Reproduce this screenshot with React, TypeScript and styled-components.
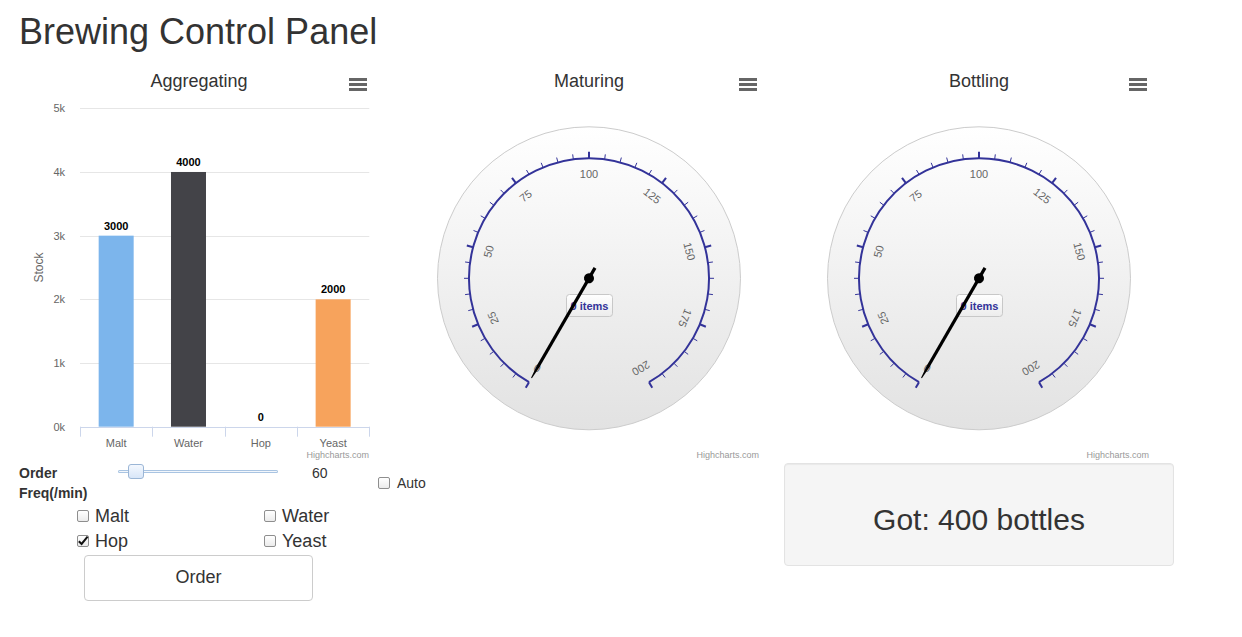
import React from "react";
import styled, { createGlobalStyle } from "styled-components";

const GlobalStyle = createGlobalStyle`
  html, body { margin: 0; padding: 0; background: #fff; }
  body {
    font-family: "Liberation Sans", Arial, Helvetica, sans-serif;
    color: #333;
    font-size: 14px;
    line-height: 20px;
  }
  * { box-sizing: border-box; }
`;

const Page = styled.div`
  width: 1242px;
  height: 637px;
  overflow: hidden;
  padding-left: 19px;
`;

const Title = styled.h1`
  margin: 12px 0 11px;
  font-size: 36px;
  line-height: 39.6px;
  font-weight: 400;
  color: #333;
`;

const Panels = styled.div`
  display: grid;
  grid-template-columns: repeat(3, 360px);
  column-gap: 30px;
  align-items: start;
`;

const Column = styled.div`
  display: flex;
  flex-direction: column;
  min-width: 0;
`;

/* ---------- chart frame ---------- */

const ChartBox = styled.div`
  width: 360px;
  height: 400px;
  display: flex;
  flex-direction: column;
`;

const ChartHeader = styled.div`
  height: 37px;
  display: grid;
  grid-template-columns: 1fr auto 1fr;
  align-items: start;
`;

const ChartTitle = styled.div`
  grid-column: 2;
  padding-top: 7px;
  font-size: 18px;
  line-height: 22px;
  color: #333;
  white-space: nowrap;
`;

const MenuButton = styled.button`
  grid-column: 3;
  justify-self: end;
  margin: 15px 12px 0 0;
  padding: 0;
  border: 0;
  background: none;
  width: 18px;
  height: 13px;
  display: block;
  cursor: pointer;
`;

const PlotSvg = styled.svg`
  display: block;
  overflow: visible;
  font-family: "Liberation Sans", Arial, Helvetica, sans-serif;
`;

const Credits = styled.div`
  height: 12px;
  padding-right: 10px;
  text-align: right;
  font-size: 9px;
  line-height: 8px;
  color: #999;
`;

const MenuIcon = () => (
  <svg width="18" height="13" viewBox="0 0 18 13">
    <rect x="0" y="0" width="18" height="3" fill="#666" />
    <rect x="0" y="5" width="18" height="3" fill="#666" />
    <rect x="0" y="10" width="18" height="3" fill="#666" />
  </svg>
);

const Chart: React.FC<{ title: string; children: React.ReactNode }> = ({ title, children }) => (
  <ChartBox>
    <ChartHeader>
      <ChartTitle>{title}</ChartTitle>
      <MenuButton aria-label="Chart menu">
        <MenuIcon />
      </MenuButton>
    </ChartHeader>
    {children}
    <Credits>Highcharts.com</Credits>
  </ChartBox>
);

/* ---------- bar chart ---------- */

const BARS = [
  { name: "Malt", value: 3000, color: "#7cb5ec" },
  { name: "Water", value: 4000, color: "#434348" },
  { name: "Hop", value: 0, color: "#90ed7d" },
  { name: "Yeast", value: 2000, color: "#f7a35c" },
];

const PL = 61;
const PR = 350.3;
const PT = 8.3;
const PB = 326.7;
const yOf = (v: number) => PB - (v / 5000) * (PB - PT);
const crisp = (v: number) => Math.round(v) + 0.5;

const BarChart = () => {
  const cat = (PR - PL) / BARS.length;
  return (
    <PlotSvg width={360} height={351} viewBox="0 0 360 351">
      {[1000, 2000, 3000, 4000, 5000].map((v) => (
        <line key={v} x1={PL} x2={PR} y1={crisp(yOf(v))} y2={crisp(yOf(v))} stroke="#e6e6e6" strokeWidth={1} />
      ))}
      {[0, 1000, 2000, 3000, 4000, 5000].map((v) => (
        <text key={v} x={46} y={yOf(v) + 4} fontSize={11} fill="#666" textAnchor="end">
          {v / 1000}k
        </text>
      ))}
      <text transform={`translate(24 ${(PT + PB) / 2}) rotate(-90)`} fontSize={12} fill="#666" textAnchor="middle">
        Stock
      </text>
      {BARS.map((b, i) => {
        const c = PL + cat * i + cat / 2;
        const top = yOf(b.value);
        return (
          <g key={b.name}>
            {b.value > 0 && <rect x={c - 17.5} y={top} width={35} height={PB - top} fill={b.color} />}
            <text
              x={c}
              y={top - 6}
              fontSize={11}
              fontWeight="bold"
              fill="#000"
              stroke="#fff"
              strokeWidth={2}
              strokeLinejoin="round"
              paintOrder="stroke"
              textAnchor="middle"
            >
              {b.value}
            </text>
            <text x={c} y={346.5} fontSize={11} fill="#666" textAnchor="middle">
              {b.name}
            </text>
          </g>
        );
      })}
      <line x1={PL} x2={PR} y1={crisp(PB)} y2={crisp(PB)} stroke="#ccd6eb" strokeWidth={1} />
      {[0, 1, 2, 3, 4].map((i) => {
        const x = crisp(PL + cat * i);
        return <line key={i} x1={x} x2={x} y1={PB} y2={PB + 10} stroke="#ccd6eb" strokeWidth={1} />;
      })}
    </PlotSvg>
  );
};

/* ---------- gauge ---------- */

const CX = 180;
const CY = 178.3;
const AXIS = "#333399";

const polar = (r: number, deg: number): [number, number] => {
  const a = (deg * Math.PI) / 180;
  return [CX + r * Math.sin(a), CY - r * Math.cos(a)];
};
const angleOf = (v: number) => -150 + v * 1.5;

const Gauge: React.FC<{ value: number; id: string }> = ({ value, id }) => {
  const [sx, sy] = polar(120, -150);
  const [ex, ey] = polar(120, 150);
  const ticks: React.ReactNode[] = [];
  for (let v = 0; v <= 200; v += 5) {
    const major = v % 25 === 0;
    const a = angleOf(v);
    const [x1, y1] = polar(120, a);
    const [x2, y2] = polar(major ? 126.5 : 125, a);
    ticks.push(<line key={v} x1={x1} y1={y1} x2={x2} y2={y2} stroke={AXIS} strokeWidth={major ? 2 : 1} />);
  }
  const labels = [0, 25, 50, 75, 100, 125, 150, 175, 200].map((v) => {
    const a = angleOf(v);
    const [x, y] = polar(104, a);
    return (
      <text
        key={v}
        transform={`translate(${x} ${y}) rotate(${a})`}
        dy="0.36em"
        fontSize={11}
        fill="#666"
        textAnchor="middle"
      >
        {v}
      </text>
    );
  });
  const needleAngle = angleOf(value);
  return (
    <PlotSvg width={360} height={351} viewBox="0 0 360 351">
      <defs>
        <linearGradient id={`${id}-pane`} x1="0" y1="0" x2="0" y2="1">
          <stop offset="0" stopColor="#ffffff" />
          <stop offset="1" stopColor="#e2e2e2" />
        </linearGradient>
        <linearGradient id={`${id}-label`} x1="0" y1="0" x2="0" y2="1">
          <stop offset="0" stopColor="#ffffff" />
          <stop offset="1" stopColor="#ececec" />
        </linearGradient>
      </defs>
      <circle cx={CX} cy={CY} r={151.5} fill={`url(#${id}-pane)`} stroke="#cccccc" strokeWidth={1} />
      <path d={`M ${sx} ${sy} A 120 120 0 1 1 ${ex} ${ey}`} fill="none" stroke={AXIS} strokeWidth={2} />
      {ticks}
      {labels}
      <rect x={157.5} y={194.5} width={46} height={22} rx={3} fill={`url(#${id}-label)`} stroke="#c8c8c8" strokeWidth={1} />
      <text x={180.5} y={209.5} fontSize={11} fontWeight="bold" fill={AXIS} textAnchor="middle">
        {value} items
      </text>
      <g transform={`translate(${CX} ${CY}) rotate(${needleAngle})`}>
        <polygon points="-1.6,12 -1.6,-101 -0.5,-115 0.5,-115 1.6,-101 1.6,12" fill="#000" />
        <circle cx={0} cy={0} r={5} fill="#000" />
      </g>
    </PlotSvg>
  );
};

/* ---------- controls ---------- */

const OrderRow = styled.div`
  display: flex;
  align-items: flex-start;
  height: 40px;
`;

const FreqLabel = styled.label`
  width: 99px;
  flex: none;
  font-weight: bold;
  font-size: 14px;
  line-height: 20px;
  color: #333;
`;

const Slider = styled.input`
  flex: none;
  width: 160px;
  height: 15px;
  margin: 1px 0 0;
  padding: 0;
  -webkit-appearance: none;
  appearance: none;
  background: transparent;

  &::-webkit-slider-runnable-track {
    height: 3px;
    background: #f3f7fc;
    box-shadow: inset 0 0 0 1px #a9c4e2;
    border-radius: 2px;
  }
  &::-webkit-slider-thumb {
    -webkit-appearance: none;
    appearance: none;
    width: 16px;
    height: 15px;
    margin-top: -6px;
    border: 1px solid #9bb6d6;
    border-radius: 3px;
    background: linear-gradient(#f4f8fe, #d8e6f8);
  }
`;

const FreqValue = styled.span`
  flex: none;
  width: 100px;
  padding-left: 34px;
  font-size: 14px;
  line-height: 20px;
`;

const CheckLabel = styled.label<{ $size: number; $lh: number }>`
  display: flex;
  align-items: center;
  gap: 6px;
  font-size: ${(p) => p.$size}px;
  line-height: ${(p) => p.$lh}px;
  white-space: nowrap;
  color: #333;
`;

const AutoLabel = styled(CheckLabel)`
  margin-top: 10px;
  gap: 7px;
`;

const HiddenInput = styled.input`
  position: absolute;
  opacity: 0;
  width: 0;
  height: 0;
  margin: 0;
`;

const Box = styled.span`
  flex: none;
  width: 12px;
  height: 12px;
  border: 1px solid #8e8e8e;
  border-radius: 2px;
  background: linear-gradient(#ffffff, #ebebeb);
  display: flex;
  align-items: center;
  justify-content: center;
  overflow: visible;
`;

const CheckBox: React.FC<{ checked?: boolean; label: string; size: number; lh: number; as?: any }> = ({
  checked,
  label,
  size,
  lh,
}) => (
  <CheckLabel $size={size} $lh={lh}>
    <HiddenInput type="checkbox" defaultChecked={checked} />
    <Box>
      {checked && (
        <svg width="12" height="12" viewBox="0 0 12 12" style={{ overflow: "visible" }}>
          <path d="M1.8 6.2 L4.6 9 L10.6 1.6" fill="none" stroke="#111" strokeWidth={2} />
        </svg>
      )}
    </Box>
    {label}
  </CheckLabel>
);

const Ingredients = styled.div`
  display: grid;
  grid-template-columns: 187px auto;
  padding-left: 58px;
  margin-top: 1px;
`;

const OrderButton = styled.button`
  margin: 1px 0 0 65px;
  width: 229px;
  height: 46px;
  border: 1px solid #ccc;
  border-radius: 4px;
  background: #fff;
  font-family: inherit;
  font-size: 18px;
  color: #333;
  padding: 0;
  cursor: pointer;
`;

const Well = styled.div`
  margin: 0 -15px;
  padding: 19px;
  background: #f5f5f5;
  border: 1px solid #e3e3e3;
  border-radius: 4px;
  box-shadow: inset 0 1px 1px rgba(0, 0, 0, 0.05);
`;

const WellText = styled.h2`
  margin: 20px 0 10px;
  font-size: 30px;
  line-height: 33px;
  font-weight: 400;
  text-align: center;
  color: #333;
`;

export default function App() {
  return (
    <>
      <GlobalStyle />
      <Page>
        <Title>Brewing Control Panel</Title>
        <Panels>
          <Column>
            <Chart title="Aggregating">
              <BarChart />
            </Chart>
            <OrderRow>
              <FreqLabel>Order Freq(/min)</FreqLabel>
              <Slider type="range" min={50} max={200} defaultValue={60} />
              <FreqValue>60</FreqValue>
              <AutoLabel $size={14} $lh={20}>
                <HiddenInput type="checkbox" />
                <Box />
                Auto
              </AutoLabel>
            </OrderRow>
            <Ingredients>
              <CheckBox label="Malt" size={18} lh={25} />
              <CheckBox label="Water" size={18} lh={25} />
              <CheckBox label="Hop" size={18} lh={25} checked />
              <CheckBox label="Yeast" size={18} lh={25} />
            </Ingredients>
            <OrderButton>Order</OrderButton>
          </Column>
          <Column>
            <Chart title="Maturing">
              <Gauge id="maturing" value={0} />
            </Chart>
          </Column>
          <Column>
            <Chart title="Bottling">
              <Gauge id="bottling" value={0} />
            </Chart>
            <Well>
              <WellText>Got: 400 bottles</WellText>
            </Well>
          </Column>
        </Panels>
      </Page>
    </>
  );
}
